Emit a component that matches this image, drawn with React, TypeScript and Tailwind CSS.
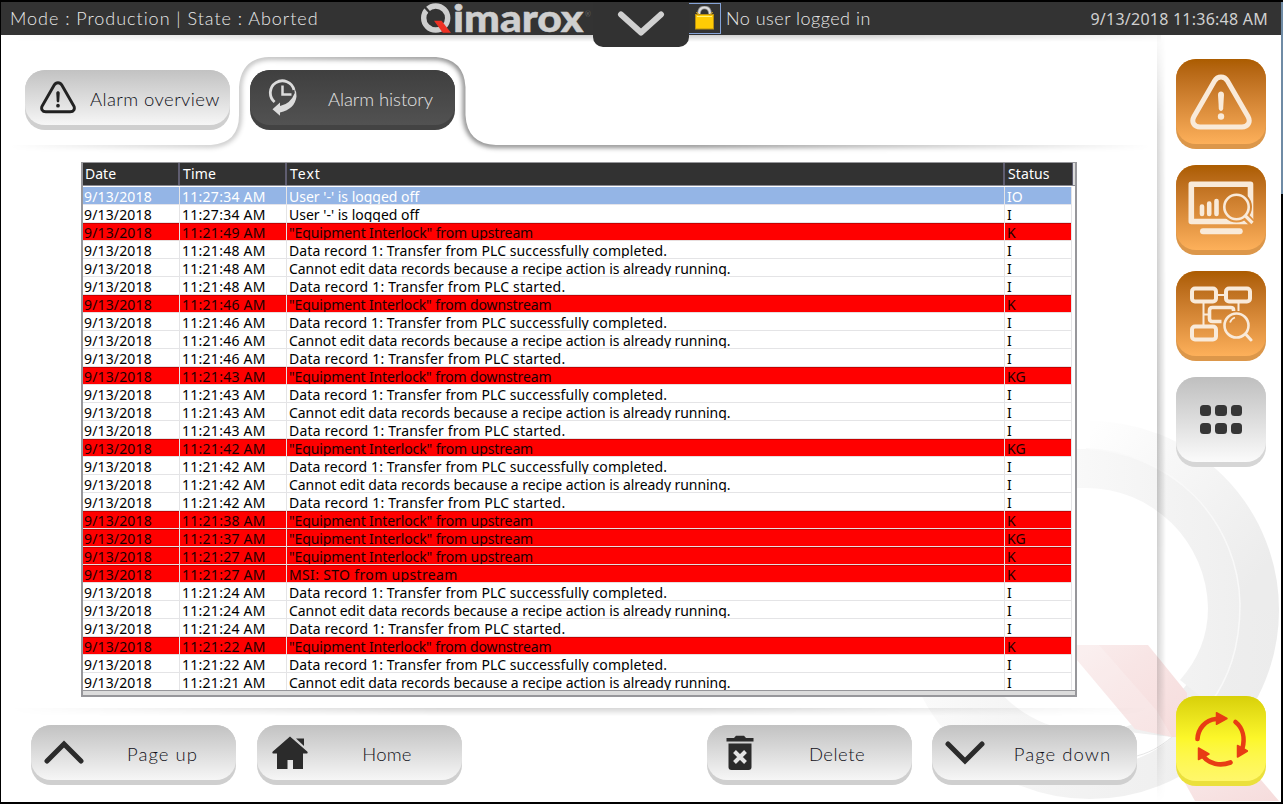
import React from "react";

type Kind = "selected" | "info" | "alarm";
type Row = { time: string; text: string; status: string; kind: Kind };

const UP = '"Equipment Interlock" from upstream';
const DOWN = '"Equipment Interlock" from downstream';
const DONE = "Data record 1: Transfer from PLC successfully completed.";
const EDIT = "Cannot edit data records because a recipe action is already running.";
const START = "Data record 1: Transfer from PLC started.";
const STO = "MSI: STO from upstream";

const tracking: Record<string, string> = {
  [UP]: "tracking-[-0.11px]",
  [DOWN]: "tracking-[-0.13px]",
  [DONE]: "tracking-[0.09px]",
  [EDIT]: "tracking-[-0.065px]",
  [START]: "tracking-[0.19px]",
  [STO]: "tracking-[0.34px]",
};

const info = (time: string, text: string): Row => ({ time, text, status: "I", kind: "info" });
const alarm = (time: string, text: string, status: string): Row => ({ time, text, status, kind: "alarm" });

const rows: Row[] = [
  { time: "11:27:34 AM", text: "User '-' is logged off", status: "IO", kind: "selected" },
  info("11:27:34 AM", "User '-' is logged off"),
  alarm("11:21:49 AM", UP, "K"),
  info("11:21:48 AM", DONE),
  info("11:21:48 AM", EDIT),
  info("11:21:48 AM", START),
  alarm("11:21:46 AM", DOWN, "K"),
  info("11:21:46 AM", DONE),
  info("11:21:46 AM", EDIT),
  info("11:21:46 AM", START),
  alarm("11:21:43 AM", DOWN, "KG"),
  info("11:21:43 AM", DONE),
  info("11:21:43 AM", EDIT),
  info("11:21:43 AM", START),
  alarm("11:21:42 AM", UP, "KG"),
  info("11:21:42 AM", DONE),
  info("11:21:42 AM", EDIT),
  info("11:21:42 AM", START),
  alarm("11:21:38 AM", UP, "K"),
  alarm("11:21:37 AM", UP, "KG"),
  alarm("11:21:27 AM", UP, "K"),
  alarm("11:21:27 AM", STO, "K"),
  info("11:21:24 AM", DONE),
  info("11:21:24 AM", EDIT),
  info("11:21:24 AM", START),
  alarm("11:21:22 AM", DOWN, "K"),
  info("11:21:22 AM", DONE),
  info("11:21:21 AM", EDIT),
];

const rowStyle: Record<Kind, string> = {
  selected: "bg-[#94b5e6] text-white border-[#e4e4ea]",
  info: "bg-white text-black border-[#e4e4e6]",
  alarm: "bg-[#ff0000] text-[#1c0000] border-[#e8dede] shadow-[inset_0_1px_0_#c80000]",
};

/* ---------- decoration ---------- */

function Watermark() {
  return (
    <svg className="absolute left-0 top-0" width="1280" height="800" viewBox="1 2 1280 800">
      <defs>
        <linearGradient id="ring" gradientUnits="userSpaceOnUse" x1="1100" y1="420" x2="1270" y2="560">
          <stop offset="0" stopColor="#fefefe" />
          <stop offset="0.5" stopColor="#f5f5f5" />
          <stop offset="1" stopColor="#ececec" />
        </linearGradient>
        <linearGradient id="ringLow" gradientUnits="userSpaceOnUse" x1="900" y1="0" x2="1280" y2="0">
          <stop offset="0" stopColor="#fbfbfb" />
          <stop offset="0.4" stopColor="#f3f3f3" />
          <stop offset="1" stopColor="#ececec" />
        </linearGradient>
        <linearGradient id="ringIn" x1="0" y1="0" x2="1" y2="0">
          <stop offset="0" stopColor="#f9f9f9" />
          <stop offset="1" stopColor="#efefef" />
        </linearGradient>
        <linearGradient id="leg" x1="0" y1="0" x2="1" y2="1">
          <stop offset="0" stopColor="#faeeee" />
          <stop offset="0.4" stopColor="#f8e5e5" />
          <stop offset="1" stopColor="#f6dcdc" />
        </linearGradient>
      </defs>
      <path d="M1090 454.500A155.500 155.500 0 0 1 1245.500 610" fill="none" stroke="url(#ring)" strokeWidth="67" />
      <path d="M934.500 610A155.500 155.500 0 0 0 1245.500 610" fill="none" stroke="url(#ringLow)" strokeWidth="67" />
      <path d="M1070 449h16a158 158 0 0 1 154 155c0 45-12 75-30 100l-30-24c18-20 28-44 28-72a122 122 0 0 0-122-120h-16z" fill="url(#ringIn)" />
      <path d="M1086 449a158 158 0 0 1 154 155c0 45-12 75-30 100" fill="none" stroke="#f9f9f9" strokeWidth="1.500" />
      <path d="M1128 732l44 5c-14 14-30 20-44 25z" fill="#fff" />
      <path d="M1172 737c-12 10-24 17-40 20" fill="none" stroke="#e6e6e6" strokeWidth="1" />
      <path d="M1060 645h88l39 48v44l-15 0-37-8-58-69z" fill="url(#leg)" />
      <path d="M1077 645h22l58 66 15 26-37-8-58-69z" fill="#fff" opacity="0.2" />
      <path d="M1175 765l20 36h84l-36-42z" fill="url(#leg)" />
    </svg>
  );
}

function Separators() {
  return (
    <svg className="absolute left-0 top-0" width="1280" height="800" viewBox="1 2 1280 800">
      <defs>
        <linearGradient id="hd" x1="0" y1="0" x2="0" y2="1">
          <stop offset="0" stopColor="#000" stopOpacity="0.18" />
          <stop offset="1" stopColor="#000" stopOpacity="0" />
        </linearGradient>
        <linearGradient id="hr" x1="0" y1="0" x2="1" y2="0">
          <stop offset="0" stopColor="#000" stopOpacity="0.22" />
          <stop offset="1" stopColor="#000" stopOpacity="0" />
        </linearGradient>
        <linearGradient id="fadeTop" gradientUnits="userSpaceOnUse" x1="1" y1="0" x2="1160" y2="0">
          <stop offset="0" stopColor="#000" />
          <stop offset="0.3" stopColor="#fff" />
          <stop offset="0.75" stopColor="#fff" />
          <stop offset="1" stopColor="#333" />
        </linearGradient>
        <linearGradient id="fadeTab" gradientUnits="userSpaceOnUse" x1="10" y1="0" x2="1150" y2="0">
          <stop offset="0" stopColor="#000" />
          <stop offset="0.22" stopColor="#777" />
          <stop offset="0.38" stopColor="#ddd" />
          <stop offset="0.6" stopColor="#ddd" />
          <stop offset="1" stopColor="#000" />
        </linearGradient>
        <linearGradient id="fadeV" gradientUnits="userSpaceOnUse" x1="0" y1="35" x2="0" y2="802">
          <stop offset="0" stopColor="#111" />
          <stop offset="0.12" stopColor="#aaa" />
          <stop offset="0.5" stopColor="#fff" />
          <stop offset="0.85" stopColor="#aaa" />
          <stop offset="1" stopColor="#000" />
        </linearGradient>
        <mask id="mTop"><rect x="0" y="0" width="1283" height="804" fill="url(#fadeTop)" /></mask>
        <mask id="mTab"><rect x="0" y="0" width="1283" height="804" fill="url(#fadeTab)" /></mask>
        <mask id="mV"><rect x="0" y="0" width="1283" height="804" fill="url(#fadeV)" /></mask>
        <clipPath id="panel">
          <path d="M0 145H211Q239 143 239 115V87Q241 58 269 57H436Q464 59 465.500 87V115Q467 144 496 145H1150V170H0Z" />
        </clipPath>
        <filter id="soft" x="-5%" y="-20%" width="110%" height="140%"><feGaussianBlur stdDeviation="2.600" /></filter>
      </defs>
      <rect x="1" y="35" width="1160" height="7" fill="url(#hd)" mask="url(#mTop)" />
      <g mask="url(#mTab)">
        <g clipPath="url(#panel)">
          <path d="M0 145H211Q239 143 239 115V87Q241 58 269 57H436Q464 59 465.500 87V115Q467 144 496 145H1150" fill="none" stroke="#000" strokeOpacity="0.600" strokeWidth="5" filter="url(#soft)" />
        </g>
      </g>
      <rect x="10" y="708" width="1140" height="8" fill="url(#hd)" mask="url(#mTab)" />
      <rect x="1157" y="35" width="9" height="767" fill="url(#hr)" mask="url(#mV)" />
    </svg>
  );
}

/* ---------- icons ---------- */

function Warning({ size, color, width }: { size: number; color: string; width: number }) {
  return (
    <svg width={size} height={(size * 56) / 62} viewBox="0 0 62 56" fill="none">
      <path d="M24.500 7L4 42.500c-3 5.500 0 10.500 6 10.500h42c6 0 9-5 6-10.500L37.500 7c-3-5.300-10-5.300-13 0z" stroke={color} strokeWidth={width} strokeLinejoin="round" />
      <path d="M28 20.500c0-4 6-4 6 0l-.8 14c-.3 3.300-4.100 3.300-4.400 0z" fill={color} />
      <circle cx="31" cy="42.500" r="3.200" fill={color} />
    </svg>
  );
}

function HistoryIcon() {
  return (
    <svg width="30" height="38" viewBox="0 0 30 38" fill="none">
      <path d="M6.600 23A12 12 0 1 1 26 11" stroke="#dcdcdc" strokeWidth="2.800" />
      <path d="M14.500 6.500v9h9" stroke="#dcdcdc" strokeWidth="2.500" />
      <path d="M26 8.500q2.800 4 2.500 9Q27 30 12 33.500V36.800L4.500 30.200 12 23.500V27Q22.500 25 26.800 14z" fill="#dcdcdc" />
    </svg>
  );
}

function Chevron({ up = false }: { up?: boolean }) {
  return (
    <svg width="42" height="25" viewBox="0 0 42 25" fill="none" className={up ? "" : "rotate-180"}>
      <path d="M4 21L21 4l17 17" stroke="#2b2b2b" strokeWidth="5" strokeLinecap="round" strokeLinejoin="miter" />
    </svg>
  );
}

function HomeIcon() {
  return (
    <svg width="36" height="34" viewBox="0 0 36 34" fill="#2b2b2b">
      <path d="M18 .5L.8 15.500c-.8.8-.5 2 .6 2H5V33h10.500v-9H21v9h10V17.500h3.600c1.100 0 1.400-1.200.6-2z" />
      <path d="M24 2.500h8v7.500z" />
    </svg>
  );
}

function TrashIcon() {
  return (
    <svg width="28" height="36" viewBox="0 0 28 36">
      <path d="M.5 6.500V3h7.500l2-2.200h8L20 3h7.500v3.500z" fill="#2b2b2b" />
      <path d="M2.500 8.500h23V32a3 3 0 0 1-3 3h-17a3 3 0 0 1-3-3z" fill="#2b2b2b" />
      <path d="M8.500 16.500l11 11M19.500 16.500l-11 11" stroke="#e4e4e4" strokeWidth="4" />
    </svg>
  );
}

function MonitorIcon() {
  return (
    <svg width="66" height="54" viewBox="0 0 66 54" fill="none" stroke="#f9ead9">
      <mask id="lens" stroke="none">
        <rect width="66" height="54" fill="#fff" />
        <circle cx="48.500" cy="26" r="15.500" fill="#000" />
        <path d="M56 34l9 9" stroke="#000" strokeWidth="7.500" />
      </mask>
      <rect x="3.300" y="3.300" width="59.200" height="37.200" strokeWidth="5.600" strokeLinejoin="round" mask="url(#lens)" />
      <path d="M14 25.500v7.500M21.200 22.500V33M28.500 20v13" strokeWidth="4.600" strokeLinecap="round" />
      <circle cx="48.500" cy="26" r="12.200" strokeWidth="2.600" />
      <path d="M57 34.500l7.500 7.500" strokeWidth="3.200" />
      <path d="M15 50.200h36.700" strokeWidth="6" strokeLinecap="round" />
    </svg>
  );
}

function FlowIcon() {
  return (
    <svg width="64" height="56" viewBox="0 0 64 56" fill="none" stroke="#f9ead9" className="ml-[2px]">
      <rect x="2" y="2.500" width="24" height="13" rx="3" strokeWidth="4" />
      <rect x="36" y="2.500" width="24" height="13" rx="3" strokeWidth="4" />
      <rect x="2" y="40.500" width="24" height="13" rx="3" strokeWidth="4" />
      <path d="M28 9h6M13.500 17v22M13.500 28.500h6M48.500 17v8" strokeWidth="2" />
      <path d="M43.500 25v-1.500q0-2-3-2H22.500q-3 0-3 3v8q0 3 3 3h9" strokeWidth="3.600" />
      <circle cx="46.500" cy="39.500" r="12" strokeWidth="2.600" />
      <path d="M40 36.500q1.500-4 5-5" strokeWidth="1.800" />
      <path d="M55.500 48l5.500 6" strokeWidth="3" strokeLinecap="round" />
    </svg>
  );
}

function GridIcon() {
  return (
    <span className="grid grid-cols-3 gap-x-[4.5px] gap-y-[7px]">
      {[0, 1, 2, 3, 4, 5].map((i) => (
        <span key={i} className="size-[11.300px] rounded-[3.500px] bg-[#363636]" />
      ))}
    </span>
  );
}

function CycleIcon() {
  return (
    <svg width="54" height="58" viewBox="0 0 54 58" fill="none">
      <g stroke="#e83c14" strokeWidth="4.600" strokeLinecap="round">
        <path d="M3.500 29C4 19 11 10 22 9" />
        <path d="M41.500 12C49 18 51 28 48.500 38" />
        <path d="M36.500 52.500C26 56.500 15 54 9 46" />
      </g>
      <g fill="#e83c14" stroke="#e83c14" strokeWidth="1.500" strokeLinejoin="round">
        <path d="M22.500 2.700L33 8.500 22.500 14.300z" />
        <path d="M43.500 35.500v11.500l10-6z" />
        <path d="M4.500 38v11.500L15 44z" />
      </g>
    </svg>
  );
}

function LockIcon() {
  return (
    <svg width="21" height="25" viewBox="0 0 21 25" fill="none">
      <path d="M5 10V7q.5-5.500 5.500-5.500T16 7v3" stroke="#8f8f8f" strokeWidth="3.600" />
      <path d="M5 10V7q.5-5.500 5.500-5.500T16 7v3" stroke="#dedede" strokeWidth="2" />
      <rect x="1.500" y="8.500" width="18" height="14.500" fill="#ffcb05" stroke="#b98f10" />
      <path d="M3 10.500h15" stroke="#fff27a" strokeWidth="1" />
      <path d="M2 6.500q3 0 3 3.500M19 6.500q-3 0-3 3.500" stroke="#d9a817" />
    </svg>
  );
}

/* ---------- controls ---------- */

function PillButton({ label, icon, active = false, className = "", labelClass = "", iconClass = "" }: {
  label: string; icon: React.ReactNode; active?: boolean; className?: string; labelClass?: string; iconClass?: string;
}) {
  return (
    <button className={`flex h-[60px] w-[205px] shrink-0 flex-col items-stretch justify-start rounded-[20px] ${active ? "bg-[#434343]" : "bg-[#cfcfcf]"} ${className}`}>
      <span className={`flex h-[55px] items-center rounded-[20px] bg-linear-to-b ${active ? "from-[#3f3f3f] to-[#525252] text-[#e2e2e2]" : "from-[#c2c2c2] to-[#f6f6f6] text-[#101018]"}`}>
        <span className={`flex w-[65px] shrink-0 justify-center ${iconClass}`}>{icon}</span>
        <span className={`flex-1 pt-[2px] text-center font-['Lato',sans-serif] text-[18.5px] leading-6 font-light whitespace-nowrap ${labelClass}`}>{label}</span>
      </span>
    </button>
  );
}

const tileTone = {
  orange: ["bg-[#dc974a]", "from-[#ab5c00] to-[#fdb05a]"],
  gray: ["bg-[#d6d6d6]", "from-[#bfbfbf] to-[#fbfbfb]"],
  yellow: ["bg-[#ebe03c]", "from-[#d8d008] via-[#fcf72a] to-[#fff76a]"],
};

function Tile({ tone, children }: { tone: keyof typeof tileTone; children: React.ReactNode }) {
  return (
    <button className={`flex size-[90px] flex-col items-stretch justify-start rounded-[20px] ${tileTone[tone][0]}`}>
      <span className={`flex h-[85px] items-center justify-center rounded-[20px] bg-linear-to-b ${tileTone[tone][1]}`}>{children}</span>
    </button>
  );
}

function AlarmTable() {
  return (
    <div className="flex h-[535px] w-[996px] flex-col border-2 border-t border-[#97979b] bg-white font-['Noto_Sans',sans-serif] text-[14px]">
      <div className="flex h-[23px] shrink-0 border-b border-[#8b8b92] bg-[#dcdcdc]">
        <div className="flex w-[990px] border-r border-[#5f5d70] bg-[#323232] leading-[22px] text-white">
          <span className="w-[97px] border-r-2 border-[#5f5d70] pl-[2px]">Date</span>
          <span className="w-[107px] border-r-2 border-[#5f5d70] pl-[3px] tracking-[0.2px]">Time</span>
          <span className="w-[718px] border-r-2 border-[#5f5d70] pl-[3px] tracking-[1px]">Text</span>
          <span className="pl-[3px] tracking-[0.1px]">Status</span>
        </div>
      </div>
      <div className="mt-px h-[504px] w-[989px] shrink-0 overflow-hidden border-r border-[#e4e4e6]">
        {rows.map((r, i) => (
          <div key={i} className={`flex h-[18px] overflow-hidden border-b leading-[20px] whitespace-nowrap ${rowStyle[r.kind]}`}>
            <span className="w-[97px] border-r border-[#e4e4e6] pl-px tracking-[0.15px]">9/13/2018</span>
            <span className="w-[107px] border-r border-[#e4e4e6] pl-[2px] tracking-[0.27px]">{r.time}</span>
            <span className={`w-[718px] border-r border-[#e4e4e6] pl-[2px] ${tracking[r.text] ?? ""}`}>{r.text}</span>
            <span className="pl-[2px]">{r.status}</span>
          </div>
        ))}
      </div>
      <div className="-mt-px min-h-0 flex-1 border-t border-[#97979b] bg-[#dcdcdc]" />
    </div>
  );
}

function Header() {
  return (
    <header className="relative flex h-[33px] items-center bg-[#333333] font-['Lato',sans-serif] text-[18px] font-light text-[#e8e8e8]">
      <div className="w-[419px] pl-[9px] tracking-[0.97px] whitespace-nowrap">Mode : Production | State : Aborted</div>
      <div className="flex h-full w-[173px] items-start">
        <svg width="172" height="33" viewBox="0 0 172 33" className="overflow-visible">
          <circle cx="15.700" cy="16" r="12" fill="none" stroke="#cfcfcf" strokeWidth="5.400" />
          <path d="M3 3l8 9" fill="none" stroke="#333" strokeWidth="2.400" />
          <path d="M14 18.700h7.500l9.500 12h-8.200z" fill="#ee3124" />
          <text x="33" y="30.300" textLength="130.500" lengthAdjust="spacingAndGlyphs" fontFamily="Lato, sans-serif" fontWeight="900" fontSize="38" fill="#cfcfcf" stroke="#cfcfcf" strokeWidth="0.500">imarox</text>
          <text x="165" y="15" fontFamily="Lato, sans-serif" fontSize="7" fill="#888">®</text>
        </svg>
      </div>
      <div className="z-10 flex h-[45px] w-[96px] items-start justify-center self-start rounded-b-[10px] bg-[#323232] pt-[9px]">
        <svg width="48" height="26" viewBox="0 0 48 26" fill="none">
          <path d="M4 3.500l20 18 20-18" stroke="#d0d0d0" strokeWidth="6" strokeLinecap="round" strokeLinejoin="round" />
        </svg>
      </div>
      <div className="-ml-px flex h-[31px] w-[33px] items-center justify-center border border-[#86a4d8]"><LockIcon /></div>
      <div className="pl-[5px] tracking-[0.5px]">No user logged in</div>
      <div className="ml-auto pr-[13px] font-['Noto_Sans',sans-serif] text-[16px] font-normal tracking-[0.24px] text-[#d0d0d0]">9/13/2018 11:36:48 AM</div>
    </header>
  );
}

export default function App() {
  return (
    <div className="h-[804px] w-[1283px] overflow-hidden bg-black bg-[linear-gradient(#6f8ba5,#6f8ba5)] bg-[length:2px_192px] bg-[position:1281px_2px] bg-no-repeat pt-[2px] pl-px">
      <div className="relative isolate flex h-[800px] w-[1280px] flex-col overflow-hidden bg-white">
        <div className="absolute inset-0 -z-10"><Watermark /><Separators /></div>
        <Header />
        <div className="flex flex-1">
          <main className="flex w-[1157px] flex-col">
            <nav className="flex h-[127px] gap-[20px] pt-[35px] pl-[24px]">
              <PillButton label="Alarm overview" icon={<Warning size={36} color="#222" width={5} />} labelClass="pr-[13px] tracking-[0.42px]" />
              <PillButton label="Alarm history" active icon={<HistoryIcon />} labelClass="pr-[9px] tracking-[-0.1px]" />
            </nav>
            <div className="pl-[80px]"><AlarmTable /></div>
            <footer className="flex pt-[28px] pl-[30px]">
              <PillButton label="Page up" icon={<Chevron up />} labelClass="pr-[7px] tracking-[1.05px]" />
              <PillButton label="Home" icon={<HomeIcon />} className="ml-[21px]" labelClass="pr-[10px] tracking-[0.2px]" />
              <PillButton label="Delete" icon={<TrashIcon />} className="ml-[245px]" labelClass="pr-[10px] tracking-[0.5px]" />
              <PillButton label="Page down" icon={<Chevron />} className="ml-[20px]" labelClass="pr-[9px] tracking-[1.05px]" />
            </footer>
          </main>
          <aside className="flex flex-1 flex-col gap-[16px] pt-[24px] pl-[18px]">
            <Tile tone="orange"><Warning size={62} color="#f9ead9" width={5} /></Tile>
            <Tile tone="orange"><MonitorIcon /></Tile>
            <Tile tone="orange"><FlowIcon /></Tile>
            <Tile tone="gray"><GridIcon /></Tile>
            <div className="mt-auto pb-[16px]"><Tile tone="yellow"><CycleIcon /></Tile></div>
          </aside>
        </div>
      </div>
    </div>
  );
}
